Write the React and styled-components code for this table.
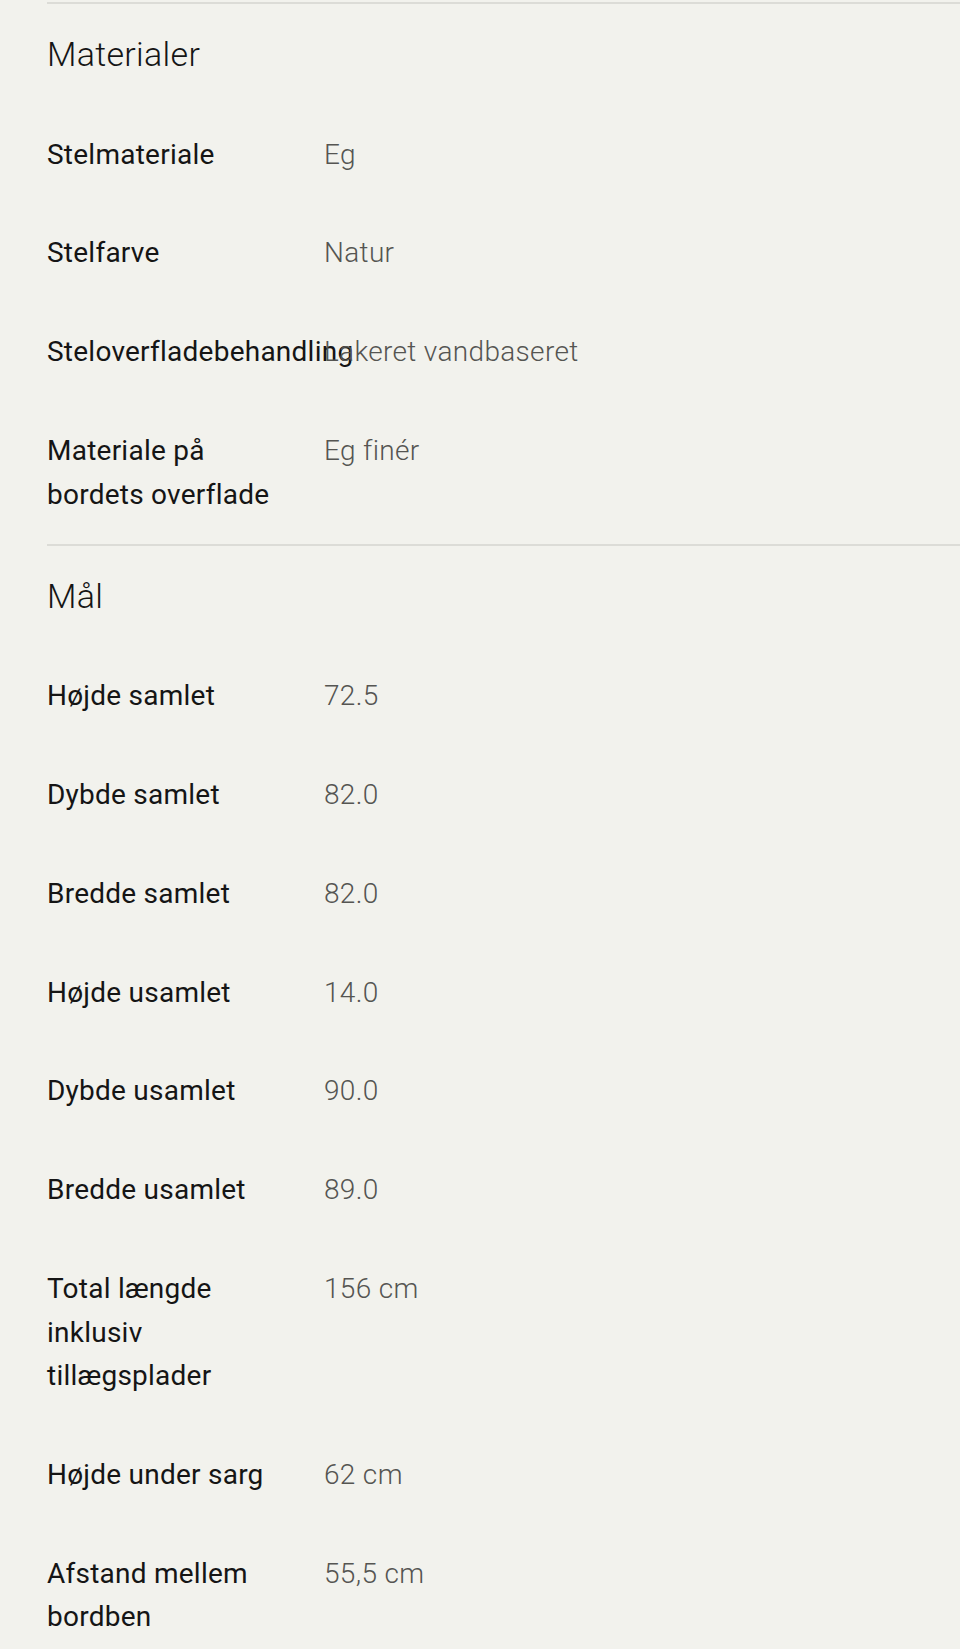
import React from 'react'
import styled, { createGlobalStyle } from 'styled-components'

const sections = [
    {
        title: 'Materialer',
        rows: [
            ['Stelmateriale', 'Eg'],
            ['Stelfarve', 'Natur'],
            ['Steloverfladebehandling', 'Lakeret vandbaseret'],
            ['Materiale på bordets overflade', 'Eg finér'],
        ],
    },
    {
        title: 'Mål',
        rows: [
            ['Højde samlet', '72.5'],
            ['Dybde samlet', '82.0'],
            ['Bredde samlet', '82.0'],
            ['Højde usamlet', '14.0'],
            ['Dybde usamlet', '90.0'],
            ['Bredde usamlet', '89.0'],
            ['Total længde inklusiv tillægsplader', '156 cm'],
            ['Højde under sarg', '62 cm'],
            ['Afstand mellem bordben', '55,5 cm'],
        ],
    },
]

function App() {
    return (
        <>
            <GlobalStyle />
            <Page>
                {sections.map(section => (
                    <Section key={section.title}>
                        <Heading>{section.title}</Heading>
                        {section.rows.map(([label, value]) => (
                            <Row key={label}>
                                <Label>{label}</Label>
                                <Value>{value}</Value>
                            </Row>
                        ))}
                    </Section>
                ))}
            </Page>
        </>
    )
}

const GlobalStyle = createGlobalStyle`
    body {
        margin: 0;
        background: #f2f2ed;
        font-family: Roboto, "Noto Sans", sans-serif;
        color: #151515;
    }
`

const Page = styled.div`
    padding: 2px 0 0 47px;
    min-height: 1649px;
    box-sizing: border-box;
`

const Section = styled.section`
    border-top: 2px solid #dcdcd7;
`

const Heading = styled.h2`
    margin: 0;
    padding: 28px 0 29px;
    font-size: 34px;
    font-weight: 300;
    line-height: 44px;
    letter-spacing: 0.3px;
    color: #151515;
`

const Row = styled.div`
    display: grid;
    grid-template-columns: 240px 1fr;
    column-gap: 37px;
    padding: 27.6px 0;
    font-size: 28px;
    line-height: 43.6px;
`

const Label = styled.div`
    font-weight: 400;
    letter-spacing: 0.24px;
    color: #151515;
`

const Value = styled.div`
    font-weight: 300;
    letter-spacing: 0.33px;
    color: #555552;
`

export default App
